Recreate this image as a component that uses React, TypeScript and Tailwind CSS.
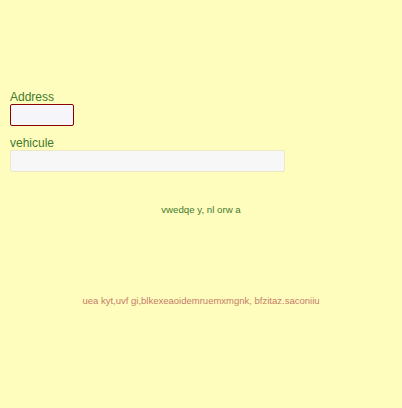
const App = () => {
  return (
    <div className="h-[408px] w-[402px] bg-[#fffdbe] font-['Liberation_Sans',Arial,sans-serif]">
      <div className="pt-[90px] pl-[10px]">
        <label className="block text-[12px] leading-[14px] text-[#3f7a2e]">Address</label>
        <input
          type="text"
          className="block h-[22px] w-[64px] rounded-[2px] border border-[#8b0000] bg-[#f5f5fa] outline-none"
        />
        <label className="mt-[10px] block text-[12px] leading-[14px] text-[#3f7a2e]">vehicule</label>
        <input
          type="text"
          className="block h-[22px] w-[275px] rounded-[2px] border border-[#ece8c4] bg-[#f7f7f7] outline-none"
        />
      </div>
      <p className="mt-[32px] text-center text-[9.7px] leading-[12px] text-[#3f7a2e]">vwedqe y, nl orw a</p>
      <p className="mt-[79px] text-center text-[9.5px] leading-[12px] text-[#c47c68]">
        uea kyt,uvf gi,blkexeaoidemruemxmgnk, bfzitaz.saconiiu
      </p>
    </div>
  );
};

export default App;
